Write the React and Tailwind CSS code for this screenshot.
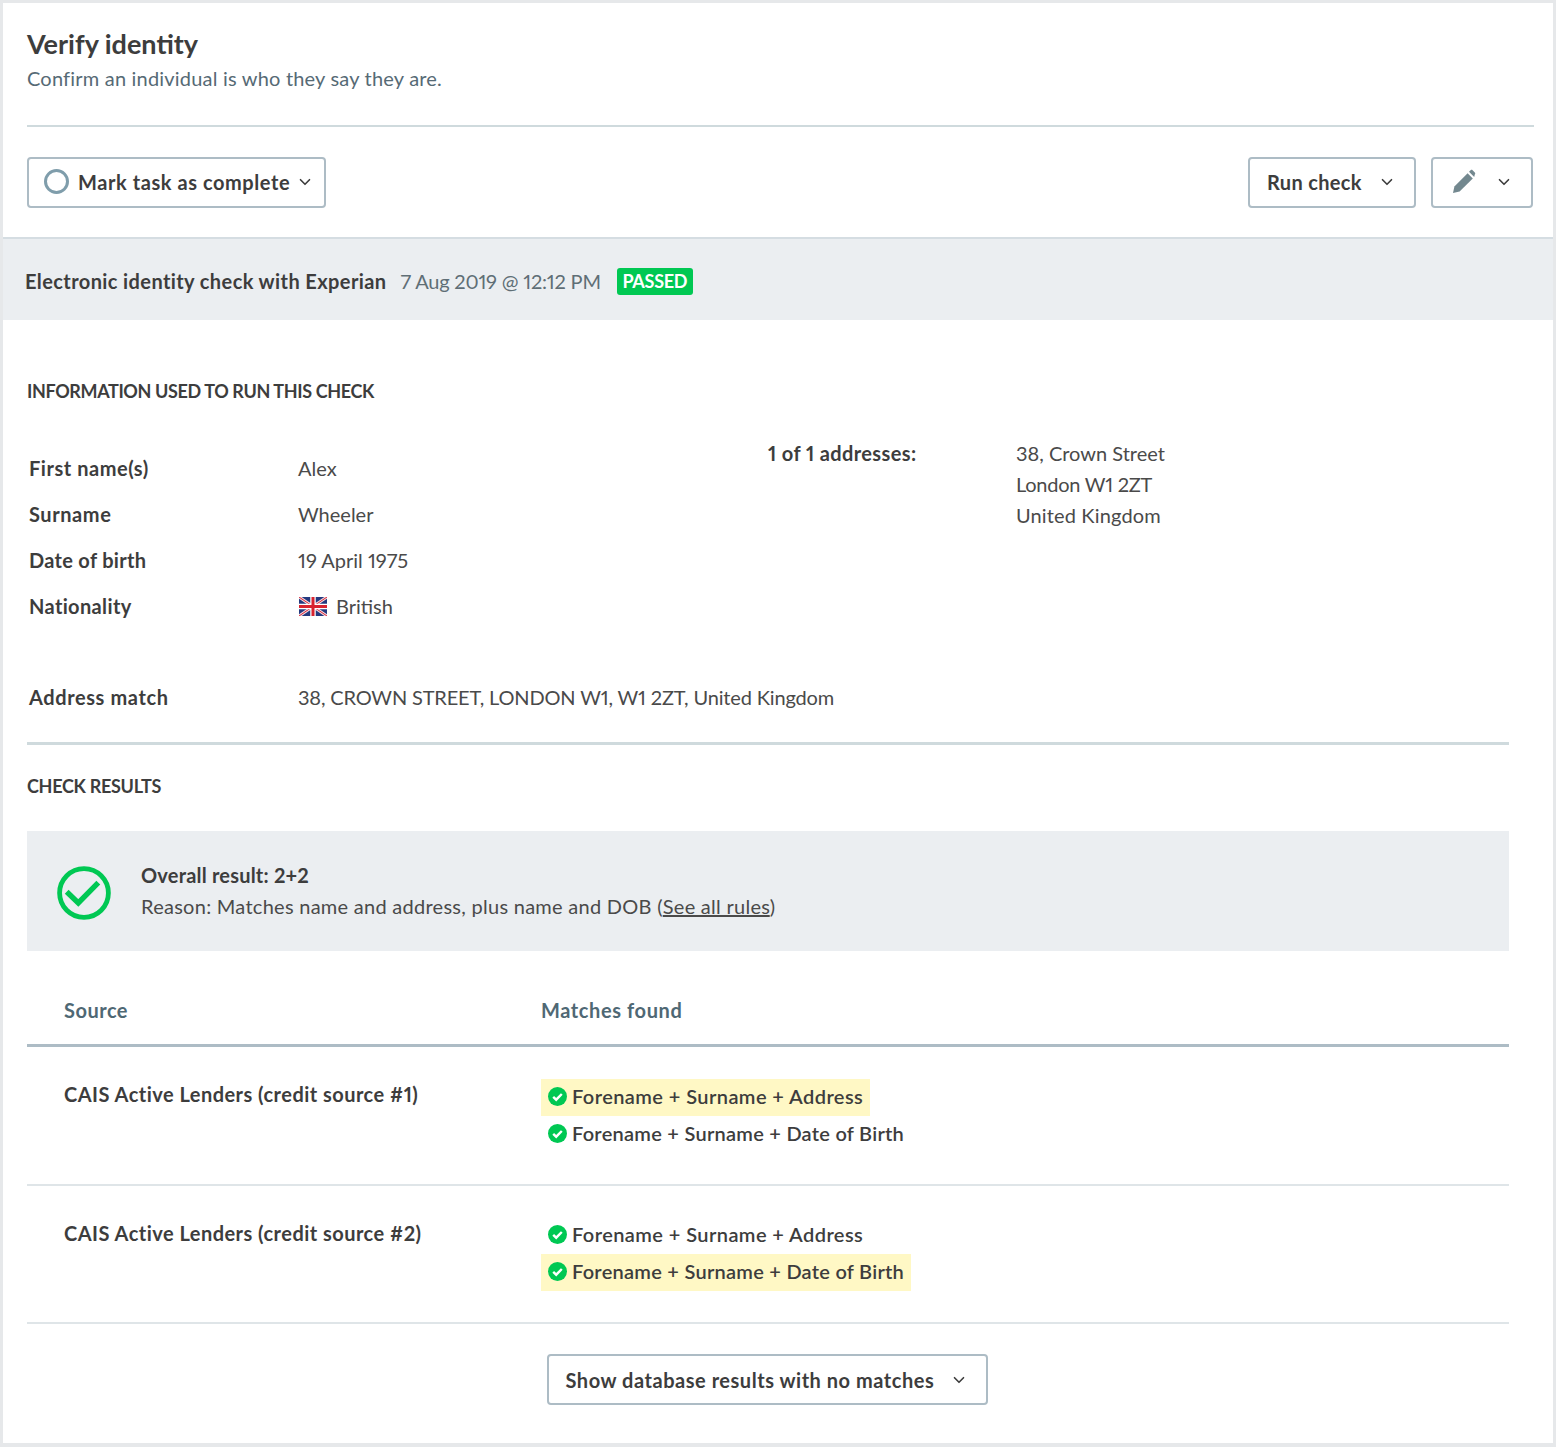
import { ChevronDown } from "lucide-react"

const infoRows = [
  { label: "First name(s)", value: "Alex", track: "tracking-[0.54px]" },
  { label: "Surname", value: "Wheeler", track: "tracking-[0.57px]" },
  { label: "Date of birth", value: "19 April 1975", track: "tracking-[0.3px]" },
  { label: "Nationality", value: "British", track: "tracking-[0.36px]", flag: true },
]

const sources = [
  {
    name: "CAIS Active Lenders (credit source #1)",
    height: "h-[139px]",
    top: "pt-[32px]",
    matches: [
      { text: "Forename + Surname + Address", track: "tracking-[0.42px]", highlight: true },
      { text: "Forename + Surname + Date of Birth", track: "tracking-[0.26px]" },
    ],
  },
  {
    name: "CAIS Active Lenders (credit source #2)",
    height: "h-[138px]",
    top: "pt-[31px]",
    matches: [
      { text: "Forename + Surname + Address", track: "tracking-[0.42px]" },
      { text: "Forename + Surname + Date of Birth", track: "tracking-[0.26px]", highlight: true },
    ],
  },
]

function Flag() {
  return (
    <svg width="28" height="19" viewBox="0 0 28 19" className="mr-[9px] ml-[1px]">
      <rect width="28" height="19" fill="#24397f" />
      <path d="M0 0L28 19M28 0L0 19" stroke="#f3d9dc" strokeWidth="3" />
      <path d="M0 0L28 19M28 0L0 19" stroke="#d8263a" strokeWidth="1" />
      <path d="M14 0V19M0 9.5H28" stroke="#fff" strokeWidth="5.5" />
      <path d="M14 0V19M0 9.5H28" stroke="#d8232f" strokeWidth="3" />
    </svg>
  )
}

function MatchIcon() {
  return (
    <svg width="19" height="19" viewBox="0 0 19 19" className="mb-[2px] shrink-0">
      <circle cx="9.5" cy="9.5" r="9.5" fill="#00c853" />
      <path d="M5.2 9.8L8.2 12.7L13.8 7" fill="none" stroke="#fff" strokeWidth="2.4" />
    </svg>
  )
}

function Match({ text, track, highlight }) {
  return (
    <div className={`flex h-[37px] w-fit items-center gap-[5px] pr-[7px] pl-[7px] ${highlight ? "bg-[#fff8c5]" : ""}`}>
      <MatchIcon />
      <span className={`pb-[4px] text-[20px] font-semibold text-[#3d3d3d] ${track}`}>{text}</span>
    </div>
  )
}

function OutlineButton({ children, className }) {
  return (
    <button className={`flex h-[51px] items-center rounded-[4px] border-2 border-[#adbcc5] bg-white text-[20px] font-bold text-[#3d3d3d] ${className}`}>
      {children}
    </button>
  )
}

export default function App() {
  return (
    <div className="h-[1447px] w-[1556px] bg-[#e6e8ea] pt-[3px] pr-[3px] pb-[4px] pl-[3px] font-['Lato',sans-serif] text-[#3d3d3d] proportional-nums">
      <div className="h-full bg-white">
        <div className="px-[24px] pt-[22px]">
          <h1 className="h-[37px] text-[27px] leading-[37px] font-bold text-[#3d3d3d]">Verify identity</h1>
          <p className="h-[32px] text-[20px] leading-[32px] tracking-[0.2px] text-[#566a75]">Confirm an individual is who they say they are.</p>
          <div className="mt-[31px] mr-[-5px] h-[2px] bg-[#cfdadd]" />
          <div className="mt-[30px] mr-[-4px] flex items-center justify-between">
            <OutlineButton className="w-[299px] pb-[2px] pl-[15px] tracking-[0.57px]">
              <span className="mr-[9px] h-[25px] w-[25px] rounded-full border-[3px] border-[#7f9dab]" />
              Mark task as complete
              <ChevronDown size={18} strokeWidth={2.2} className="ml-[6px]" />
            </OutlineButton>
            <div className="flex gap-[15px]">
              <OutlineButton className="w-[168px] pb-[2px] pl-[17px] tracking-[0.33px]">
                Run check
                <ChevronDown size={18} strokeWidth={2.2} className="ml-[16px]" />
              </OutlineButton>
              <OutlineButton className="w-[102px] pb-[2px] pl-[19px]">
                <svg width="25" height="25" viewBox="0 0 25 25" fill="#73888f">
                  <path d="M1 24L2.4 17.4L15.6 4.2L20.8 9.4L7.6 22.6Z" />
                  <path d="M17 2.8L18.6 1.2C19.2.6 20 .6 20.6 1.2L22.8 3.4C23.4 4 23.4 4.8 22.8 5.4L22.2 8Z" />
                </svg>
                <ChevronDown size={18} strokeWidth={2.2} className="ml-[18px]" />
              </OutlineButton>
            </div>
          </div>
        </div>

        <div className="mt-[29px] flex h-[83px] items-center border-t-2 border-[#d5dde2] bg-[#ebeef1] pl-[22px]">
          <span className="mt-[2px] text-[20px] font-bold tracking-[0.4px]">Electronic identity check with Experian</span>
          <span className="mt-[2px] ml-[14px] text-[20px] tracking-[-0.2px] text-[#5f6e76]">7 Aug 2019 @ 12:12 PM</span>
          <span className="mt-[4px] ml-[16px] flex h-[27px] w-[76px] items-center justify-center rounded-[3px] bg-[#00c853] text-[18px] font-bold tracking-[-0.3px] text-white">PASSED</span>
        </div>

        <div className="w-[1506px] pl-[24px]">
          <h2 className="mt-[59px] h-[24px] text-[18px] leading-[24px] font-bold tracking-[-0.38px]">INFORMATION USED TO RUN THIS CHECK</h2>

          <div className="mt-[35px] flex">
            <div className="w-[741px] pl-[2px]">
              <div className="pt-[7px]">
                {infoRows.map((row) => (
                  <div key={row.label} className="flex h-[46px] items-center text-[20px]">
                    <span className={`w-[269px] font-bold ${row.track}`}>{row.label}</span>
                    {row.flag && <Flag />}
                    <span className="text-[#4a4a4a]">{row.value}</span>
                  </div>
                ))}
              </div>
            </div>
            <div className="flex text-[20px] leading-[31px]">
              <span className="w-[248px] font-bold tracking-[0.38px]">1 of 1 addresses:</span>
              <div className="text-[#4a4a4a]">
                <div>38, Crown Street</div>
                <div className="tracking-[-0.27px]">London W1 2ZT</div>
                <div className="tracking-[0.14px]">United Kingdom</div>
              </div>
            </div>
          </div>

          <div className="mt-[45px] flex h-[46px] items-center pl-[2px] text-[20px]">
            <span className="w-[269px] font-bold tracking-[0.6px]">Address match</span>
            <span className="tracking-[-0.16px] text-[#4a4a4a]">38, CROWN STREET, LONDON W1, W1 2ZT, United Kingdom</span>
          </div>

          <div className="mt-[22px] h-[3px] bg-[#cfdadd]" />
          <h2 className="mt-[29px] h-[24px] text-[18px] leading-[24px] font-bold tracking-[-0.3px]">CHECK RESULTS</h2>

          <div className="mt-[33px] flex h-[120px] items-center bg-[#ebeef1] pl-[30px]">
            <svg width="54" height="54" viewBox="0 0 54 54" className="mt-[3px] mr-[30px] shrink-0">
              <circle cx="27" cy="27" r="24.4" fill="none" stroke="#00c853" strokeWidth="4.8" />
              <path d="M9.7 25.7L21.3 37L41.3 16.7" fill="none" stroke="#00c853" strokeWidth="5.4" />
            </svg>
            <div className="text-[20px] leading-[31px]">
              <div className="font-bold tracking-[0.2px]">Overall result: 2+2</div>
              <div className="tracking-[0.27px] text-[#4a4a4a]">
                Reason: Matches name and address, plus name and DOB (<span className="underline">See all rules</span>)
              </div>
            </div>
          </div>

          <div className="mt-[33px] flex h-[63px] items-center border-b-[3px] border-[#adbcc5] pb-[8px] text-[20px] font-bold text-[#4f6874]">
            <span className="w-[514px] pl-[37px] tracking-[0.5px]">Source</span>
            <span className="tracking-[0.6px]">Matches found</span>
          </div>

          {sources.map((source) => (
            <div key={source.name} className={`flex border-b-2 border-[#dfe5e8] ${source.height}`}>
              <div className="w-[514px] pt-[33px] pl-[37px] text-[20px] leading-[28px] font-bold tracking-[0.47px]">{source.name}</div>
              <div className={source.top}>
                {source.matches.map((match) => (
                  <Match key={match.text} text={match.text} track={match.track} highlight={match.highlight} />
                ))}
              </div>
            </div>
          ))}

          <div className="mt-[30px] flex justify-center pr-[2px]">
            <OutlineButton className="w-[441px] pl-[17px] tracking-[0.53px]">
              Show database results with no matches
              <ChevronDown size={18} strokeWidth={2.2} className="ml-[16px]" />
            </OutlineButton>
          </div>
        </div>
      </div>
    </div>
  )
}
